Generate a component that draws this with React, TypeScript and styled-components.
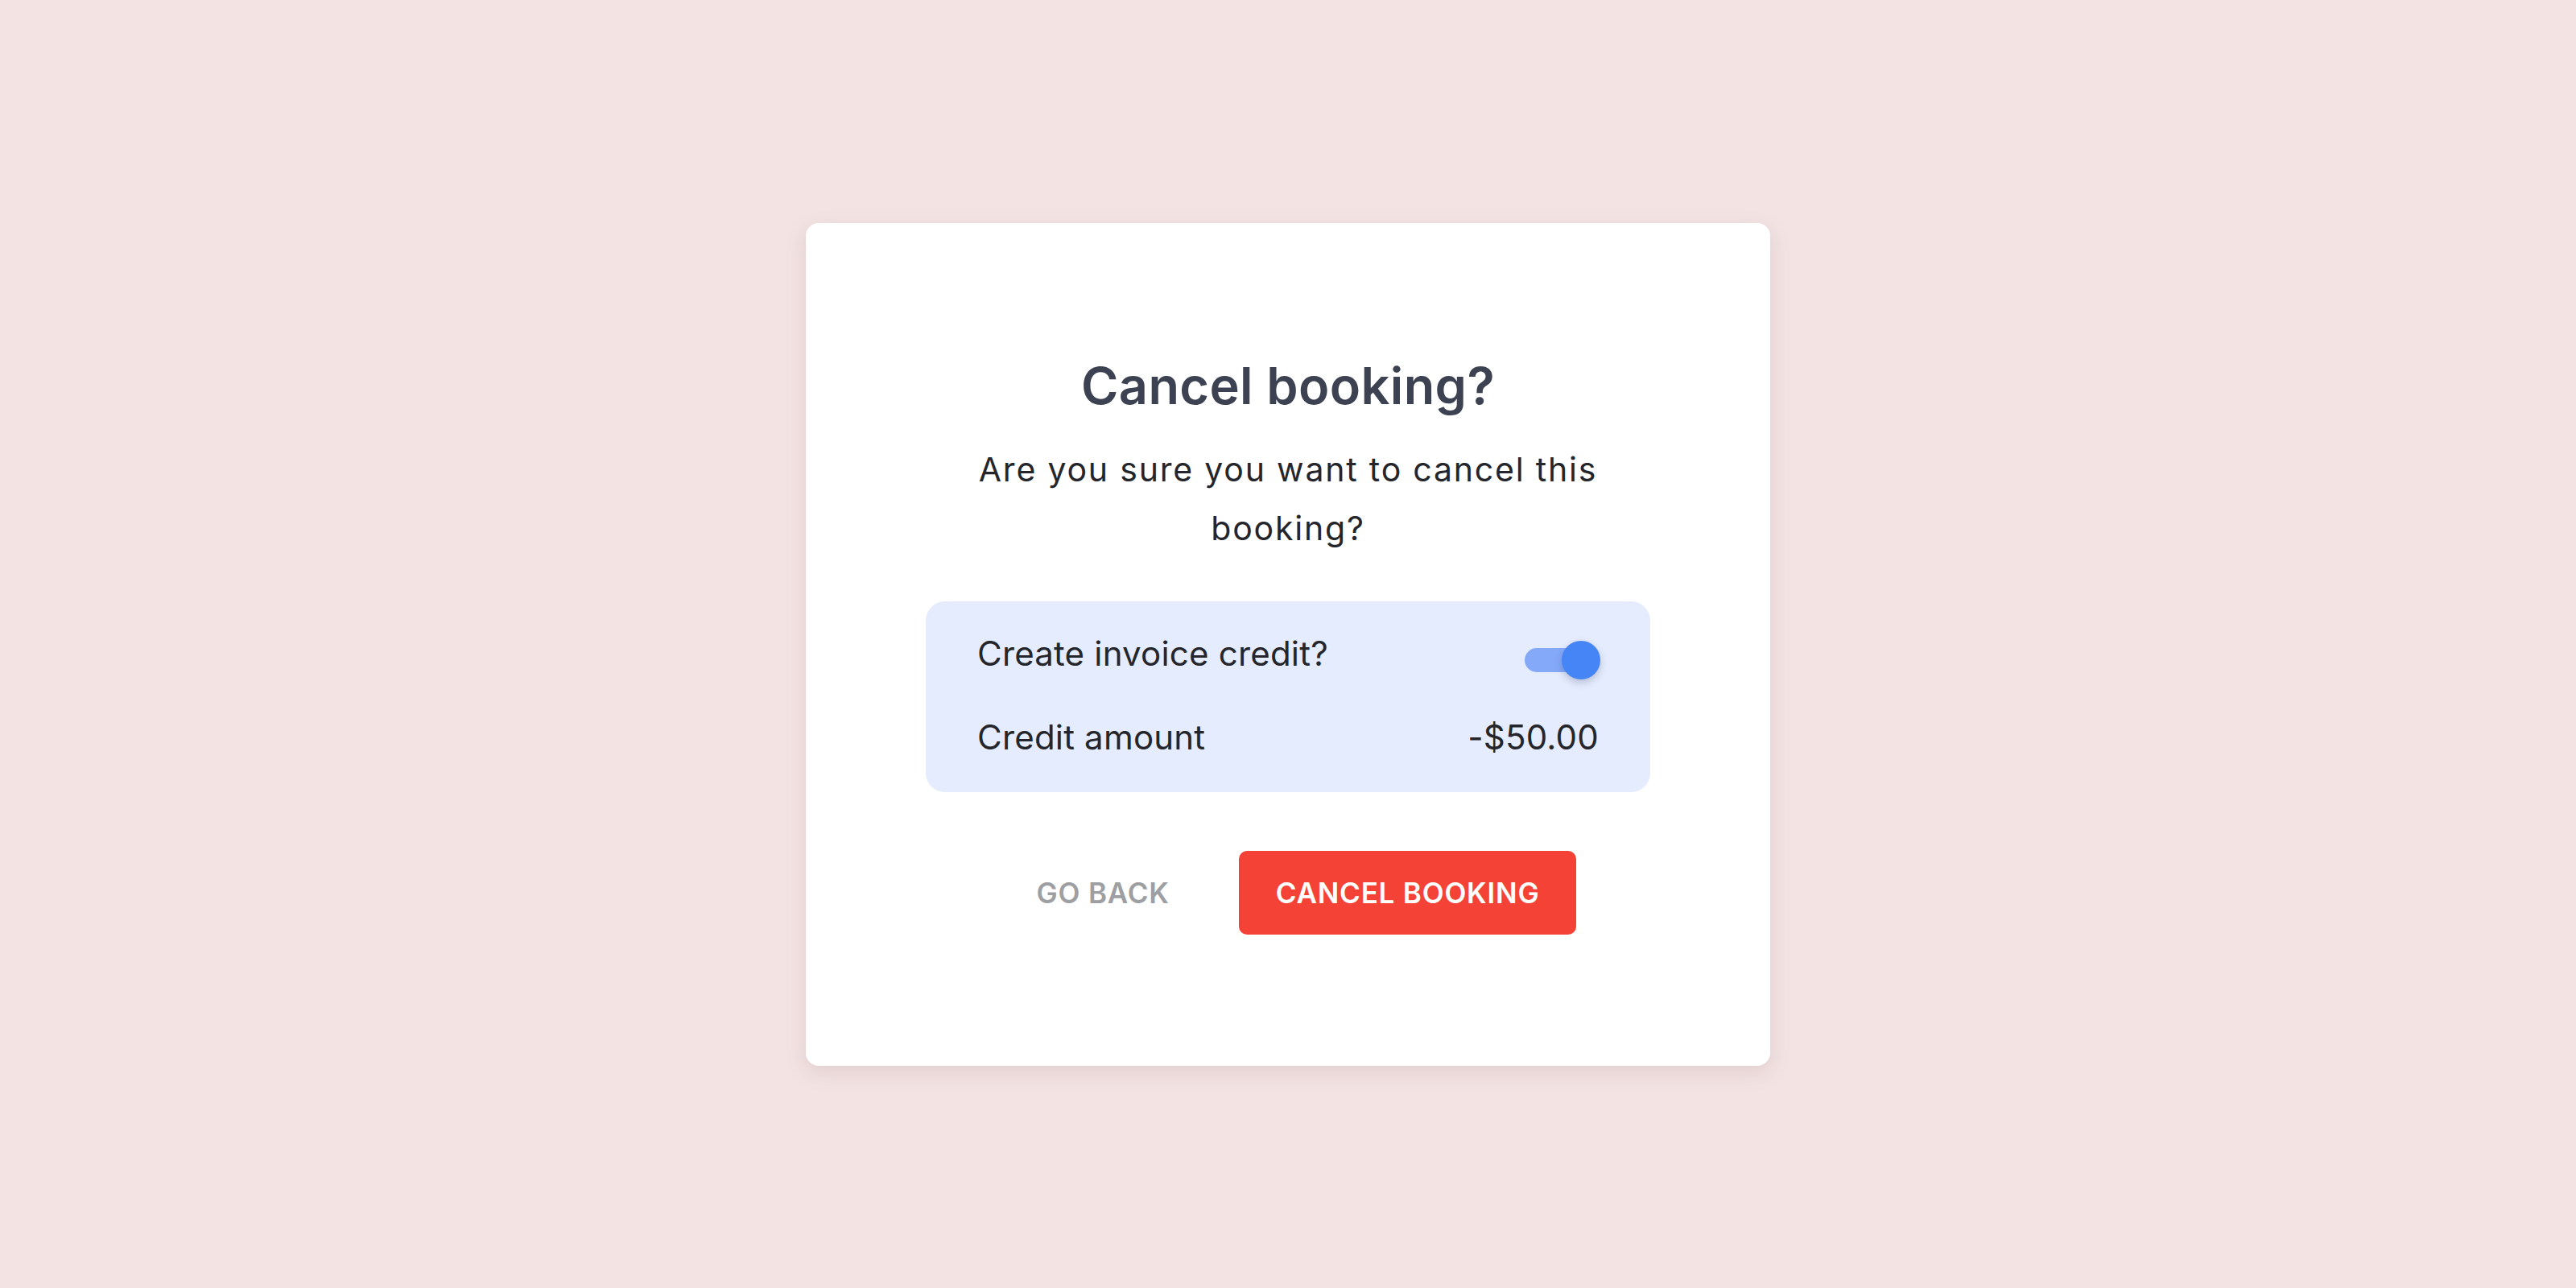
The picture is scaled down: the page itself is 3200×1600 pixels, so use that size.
import React, { useState } from 'react';
import styled, { createGlobalStyle } from 'styled-components';

const GlobalStyle = createGlobalStyle`
  html, body {
    margin: 0;
    padding: 0;
    background: #f3e3e3;
    font-family: Inter, "Noto Sans", sans-serif;
  }
`;

const Page = styled.div`
  min-height: 1600px;
  display: flex;
  align-items: center;
  justify-content: center;
`;

const Card = styled.div`
  width: 1198px;
  box-sizing: border-box;
  padding: 165px 149px 163px;
  background: #fff;
  border-radius: 16px;
  box-shadow: 0 8px 24px rgba(150, 110, 110, 0.18);
  display: flex;
  flex-direction: column;
  align-items: center;
`;

const Title = styled.h2`
  margin: 0;
  font-size: 63px;
  line-height: 75px;
  font-weight: 600;
  color: #3c4251;
  letter-spacing: 0.4px;
`;

const Subtitle = styled.p`
  margin: 30px 0 0;
  font-size: 41px;
  line-height: 73px;
  font-weight: 400;
  color: #24262b;
  text-align: center;
  letter-spacing: 1.8px;
  max-width: 900px;
`;

const CreditBox = styled.div`
  margin-top: 54px;
  width: 900px;
  box-sizing: border-box;
  padding: 39px 64px 42px;
  background: #e5ecfd;
  border-radius: 24px;
  display: flex;
  flex-direction: column;
  gap: 52px;
`;

const Row = styled.div`
  height: 52px;
  display: flex;
  align-items: center;
  justify-content: space-between;
  font-size: 42px;
  letter-spacing: 0.2px;
  color: #24262b;
`;

const ToggleWrap = styled.button`
  position: relative;
  width: 96px;
  height: 48px;
  margin: 16px -2px 0 0;
  padding: 0;
  border: none;
  background: transparent;
  cursor: pointer;
`;

const Track = styled.span<{ $on: boolean }>`
  position: absolute;
  left: 2px;
  top: 9px;
  width: 88px;
  height: 30px;
  border-radius: 15px;
  background: ${p => (p.$on ? '#84a9f9' : '#b8bcc6')};
`;

const Knob = styled.span<{ $on: boolean }>`
  position: absolute;
  top: 0;
  left: ${p => (p.$on ? '48px' : '0')};
  width: 48px;
  height: 48px;
  border-radius: 50%;
  background: ${p => (p.$on ? '#4585f6' : '#fafafa')};
  box-shadow: 0 4px 10px rgba(60, 70, 110, 0.28);
`;

const Actions = styled.div`
  margin-top: 73px;
  display: flex;
  gap: 40px;
`;

const Button = styled.button<{ $primary?: boolean }>`
  height: 104px;
  padding: 0 46px;
  border: none;
  border-radius: 10px;
  font-family: Inter, "Noto Sans", sans-serif;
  font-size: 35px;
  font-weight: 600;
  letter-spacing: 0.8px;
  text-transform: uppercase;
  cursor: pointer;
  background: ${p => (p.$primary ? '#f44336' : 'transparent')};
  color: ${p => (p.$primary ? '#ffffff' : '#9e9fa3')};
`;

export default function App() {
  const [credit, setCredit] = useState(true);
  return (
    <Page>
      <GlobalStyle />
      <Card>
        <Title>Cancel booking?</Title>
        <Subtitle>Are you sure you want to cancel this booking?</Subtitle>
        <CreditBox>
          <Row>
            <span>Create invoice credit?</span>
            <ToggleWrap onClick={() => setCredit(!credit)} aria-label="toggle credit">
              <Track $on={credit} />
              <Knob $on={credit} />
            </ToggleWrap>
          </Row>
          <Row>
            <span>Credit amount</span>
            <span>-$50.00</span>
          </Row>
        </CreditBox>
        <Actions>
          <Button>Go back</Button>
          <Button $primary>Cancel booking</Button>
        </Actions>
      </Card>
    </Page>
  );
}
